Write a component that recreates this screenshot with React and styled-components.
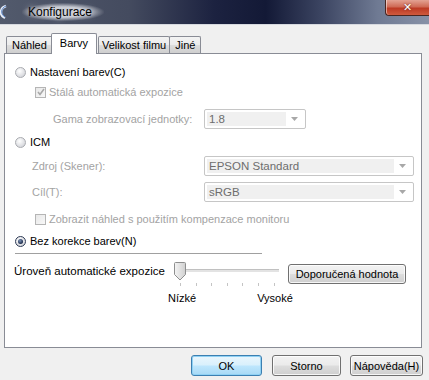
import React from 'react';
import styled, { createGlobalStyle, css } from 'styled-components';

const GlobalStyle = createGlobalStyle`
  body {
    margin: 0;
    background: #f0f0f0;
    font-family: "Liberation Sans", Arial, sans-serif;
    font-size: 11px;
    color: #000;
    white-space: nowrap;
  }
`

const Window = styled.div`
  width: 429px;
  height: 380px;
  overflow: hidden;
  background: #f0f0f0;
  display: flex;
  flex-direction: column;
`

const TitleBar = styled.div`
  height: 24px;
  flex: none;
  display: flex;
  align-items: center;
  background: linear-gradient(90deg, #525a6c 0%, #444b5f 30%, #1c2240 50%, #131936 62%, #3c4562 75%, #6f7a93 88%, #8791a7 100%);
  border-bottom: 1px solid #d6d9df;
`

const AppIcon = styled.svg`
  width: 12px;
  height: 16px;
  margin-left: -4px;
  flex: none;
`

const Title = styled.span`
  margin-left: 14px;
  padding: 2px 12px 2px 6px;
  font-size: 12px;
  color: #000;
  background: radial-gradient(ellipse at center, rgba(205, 208, 216, 0.95) 40%, rgba(160, 164, 176, 0) 72%);
  text-shadow: 0 0 6px rgba(235, 236, 240, 0.9);
`

const CloseButton = styled.div`
  margin-left: auto;
  align-self: flex-start;
  width: 44px;
  height: 16px;
  box-sizing: border-box;
  border: 1px solid #4a2620;
  border-top: none;
  border-right: none;
  border-radius: 0 0 0 4px;
  background: linear-gradient(180deg, #e3a293 0%, #cf6a55 45%, #bd3a24 55%, #cf5a3e 100%);
  box-shadow: inset 1px 0 0 rgba(255, 255, 255, 0.5);
  display: flex;
  align-items: center;
  justify-content: center;
  color: #fff;
  font: bold 11px "DejaVu Sans", sans-serif;
  text-shadow: 0 0 2px #5a1a10;
`

const Body = styled.div`
  flex: 1;
  display: flex;
  flex-direction: column;
  padding: 8px 7px 0 4px;
`

const TabStrip = styled.div`
  display: flex;
  align-items: flex-end;
  height: 20px;
  padding-left: 2px;
  position: relative;
  z-index: 1;
`

const Tab = styled.div`
  box-sizing: border-box;
  height: 17px;
  padding: 0 ${p => p.$px || 5}px;
  margin-right: -1px;
  display: flex;
  align-items: center;
  border: 1px solid #898c95;
  border-bottom: none;
  border-radius: 2px 2px 0 0;
  background: linear-gradient(180deg, #f3f3f3 0%, #ebebeb 50%, #dddddd 51%, #cfcfcf 100%);
  ${p => p.$active && css`
    height: 21px;
    margin: 0 1px -1px -1px;
    padding: 0 8px 3px;
    background: #fff;
    position: relative;
    z-index: 2;
  `}
`

const Panel = styled.div`
  height: 295px;
  box-sizing: border-box;
  background: #fff;
  border: 1px solid #898c95;
  display: flex;
  flex-direction: column;
  padding-top: 9px;
`

const Row = styled.div`
  height: ${p => p.$h || 18}px;
  margin-top: ${p => p.$mt || 0}px;
  padding-left: ${p => p.$pl || 0}px;
  display: flex;
  align-items: center;
  color: ${p => (p.$disabled ? '#a3a3a3' : '#000')};
`

const FieldRow = styled.div`
  height: 20px;
  margin-top: ${p => p.$mt || 0}px;
  display: grid;
  grid-template-columns: 199px ${p => p.$w}px;
  align-items: center;
`

const FieldLabel = styled.span`
  padding-left: ${p => p.$pl}px;
  color: #a3a3a3;
`

const Select = styled.div`
  box-sizing: border-box;
  height: 20px;
  border: 1px solid #c6c6c6;
  border-radius: 2px;
  background: #fff;
  display: flex;
  align-items: stretch;
  padding: 2px;
  color: #6d6d6d;
  font-size: 11.5px;
`

const SelectValue = styled.div`
  flex: 1;
  background: #f0f0f0;
  display: flex;
  align-items: center;
  padding-left: 2px;
`

const SelectArrow = styled.div`
  width: 17px;
  display: flex;
  align-items: center;
  justify-content: center;
  svg { width: 7px; height: 4px; }
`

const Radio = styled.span`
  width: 11px;
  height: 11px;
  box-sizing: border-box;
  border-radius: 50%;
  border: 1px solid ${p => (p.$checked ? '#2d3a55' : '#a9abb0')};
  background: radial-gradient(circle at 40% 35%, #ffffff 0%, #dedfe3 60%, #c9cbd0 100%);
  margin-right: 4px;
  display: flex;
  align-items: center;
  justify-content: center;
  flex: none;
  &::after {
    content: '';
    display: ${p => (p.$checked ? 'block' : 'none')};
    width: 5px;
    height: 5px;
    border-radius: 50%;
    background: radial-gradient(circle at 40% 35%, #7c93b8 0%, #1d2c4c 70%);
  }
`

const Check = styled.span`
  width: 11px;
  height: 11px;
  box-sizing: border-box;
  border: 1px solid #b5b5b5;
  background: linear-gradient(135deg, #e8e8e8, #f8f8f8);
  margin-right: 3px;
  flex: none;
  display: flex;
  align-items: center;
  justify-content: center;
  svg { width: 8px; height: 8px; }
`

const Divider = styled.div`
  height: 1px;
  margin: 3px 0 0 10px;
  width: 247px;
  background: #a0a0a0;
`

const SliderRow = styled.div`
  margin-top: 6px;
  height: 22px;
  display: flex;
  align-items: center;
`

const SliderLabel = styled.span`
  width: 160px;
  padding-left: 9px;
  flex: none;
  box-sizing: border-box;
  font-size: 11.5px;
`

const Slider = styled.div`
  width: 114px;
  height: 22px;
  flex: none;
  position: relative;
`

const Track = styled.div`
  position: absolute;
  left: 10px;
  right: 0;
  top: 9px;
  height: 2px;
  background: #e3e3e3;
  border-top: 1px solid #c0c0c0;
`

const Thumb = styled.svg`
  position: absolute;
  left: 9px;
  top: 2px;
  width: 12px;
  height: 19px;
`

const Tick = styled.span`
  position: absolute;
  top: 23px;
  width: 1px;
  height: 3px;
  background: #c4c4c4;
`

const PushButton = styled.div`
  box-sizing: border-box;
  height: ${p => p.$h || 21}px;
  width: ${p => p.$w}px;
  margin-left: ${p => p.$ml || 0}px;
  margin-top: ${p => p.$mt || 0}px;
  border: 1px solid #707070;
  border-radius: 3px;
  display: flex;
  align-items: center;
  justify-content: center;
  background: linear-gradient(180deg, #f2f2f2 0%, #ebebeb 48%, #dddddd 52%, #cfcfcf 100%);
  box-shadow: inset 0 0 0 1px rgba(255, 255, 255, 0.8);
  color: #000;
  ${p => p.$default && css`
    border-color: #3c7fb1;
    background: linear-gradient(180deg, #eaf6fd 0%, #d9f0fc 48%, #bee6fd 52%, #a7d9f5 100%);
    box-shadow: inset 0 0 0 1px #8fd1f4;
  `}
`

const ScaleLabels = styled.div`
  display: flex;
  height: 16px;
  margin-top: 10px;
  padding-left: 163px;
  span + span { margin-left: 61px; }
`

const Footer = styled.div`
  display: flex;
  justify-content: flex-end;
  align-items: center;
  padding: 7px 0 0 0;
  margin-right: -1px;
`

function Arrow() {
  return (
    <svg viewBox="0 0 7 4"><path d="M0 0h7L3.5 4z" fill="#a8a8a8" /></svg>
  );
}

function Field({ label, pl, value, w, mt }) {
  return (
    <FieldRow $w={w} $mt={mt}>
      <FieldLabel $pl={pl}>{label}</FieldLabel>
      <Select>
        <SelectValue>{value}</SelectValue>
        <SelectArrow><Arrow /></SelectArrow>
      </Select>
    </FieldRow>
  );
}

export default function App() {
  const ticks = [0, 1, 2, 3, 4, 5, 6];
  return (
    <>
      <GlobalStyle />
      <Window>
        <TitleBar>
          <AppIcon viewBox="0 0 12 16">
            <path d="M10 2C4 4 3 11 9 14" stroke="#e8eef8" strokeWidth="2.5" fill="none" />
            <path d="M10 2C5 4 4 10 9 13" stroke="#4a78c0" strokeWidth="1" fill="none" />
          </AppIcon>
          <Title>Konfigurace</Title>
          <CloseButton>✕</CloseButton>
        </TitleBar>
        <Body>
          <TabStrip>
            <Tab>Náhled</Tab>
            <Tab $active>Barvy</Tab>
            <Tab $px={3}>Velikost filmu</Tab>
            <Tab>Jiné</Tab>
          </TabStrip>
          <Panel>
            <Row $pl={10}><Radio />Nastavení barev(C)</Row>
            <Row $pl={30} $mt={2} $disabled>
              <Check>
                <svg viewBox="0 0 8 8"><path d="M1 4l2 2.5L7 1" stroke="#a8a8a8" strokeWidth="1.6" fill="none" /></svg>
              </Check>
              Stálá automatická expozice
            </Row>
            <Field label="Gama zobrazovací jednotky:" pl={48} value="1.8" w={102} mt={8} />
            <Row $pl={10} $mt={4}><Radio />ICM</Row>
            <Field label="Zdroj (Skener):" pl={27} value="EPSON Standard" w={210} mt={5} />
            <Field label="Cíl(T):" pl={27} value="sRGB" w={210} mt={6} />
            <Row $pl={30} $mt={8} $disabled><Check />Zobrazit náhled s použitím kompenzace monitoru</Row>
            <Row $pl={10} $mt={4}><Radio $checked />Bez korekce barev(N)</Row>
            <Divider />
            <SliderRow>
              <SliderLabel>Úroveň automatické expozice</SliderLabel>
              <Slider>
                <Track />
                {ticks.map(i => (
                  <Tick key={i} style={{ left: 15 + i * 15.6 }} />
                ))}
                <Thumb viewBox="0 0 12 19">
                  <defs>
                    <linearGradient id="tg" x1="0" x2="1">
                      <stop offset="0" stopColor="#f4f4f4" />
                      <stop offset="1" stopColor="#d0d0d0" />
                    </linearGradient>
                  </defs>
                  <path d="M1.5 0.5h9a1 1 0 0 1 1 1v11l-5.5 5.5l-5.5-5.5v-11a1 1 0 0 1 1-1z" fill="url(#tg)" stroke="#8e8f8f" />
                </Thumb>
              </Slider>
              <PushButton $w={118} $h={20} $ml={9} $mt={6}>Doporučená hodnota</PushButton>
            </SliderRow>
            <ScaleLabels>
              <span>Nízké</span>
              <span>Vysoké</span>
            </ScaleLabels>
          </Panel>
          <Footer>
            <PushButton $w={71} $default>OK</PushButton>
            <PushButton $w={69} $ml={10}>Storno</PushButton>
            <PushButton $w={73} $ml={9}>Nápověda(H)</PushButton>
          </Footer>
        </Body>
      </Window>
    </>
  );
}
